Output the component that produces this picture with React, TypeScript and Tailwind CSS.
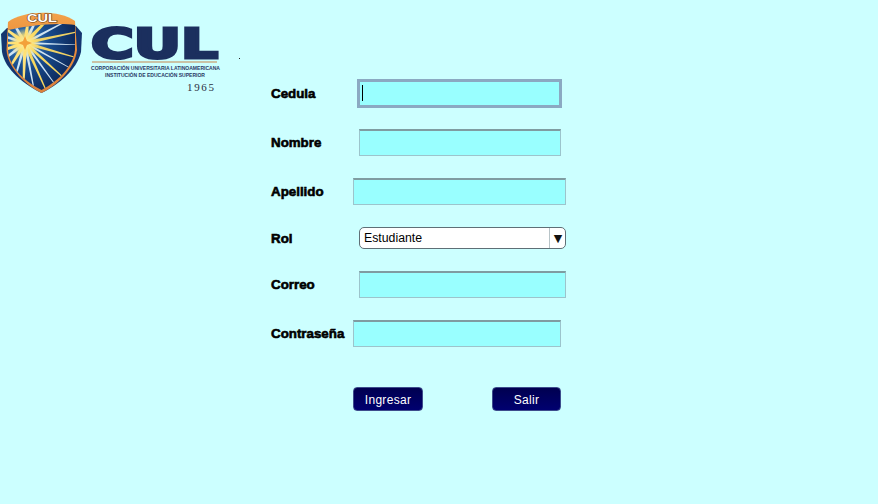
const RAYS = [
  { a: -82, c: '#ffe27a', w: 2.2 }, { a: -64, c: '#cfe4f2', w: 2 }, { a: -46, c: '#f8d860', w: 2.4 },
  { a: -28, c: '#cfe4f2', w: 1.8 }, { a: -12, c: '#f0d264', w: 2 }, { a: 2, c: '#cfe4f2', w: 1.4 },
  { a: 16, c: '#f0d264', w: 2 }, { a: 29, c: '#cfe4f2', w: 1.4 }, { a: 42, c: '#f8d860', w: 2 },
  { a: 54, c: '#cfe4f2', w: 1.6 }, { a: 66, c: '#f8d860', w: 2.2 }, { a: 79, c: '#cfe4f2', w: 1.8 },
  { a: 92, c: '#ffe27a', w: 2.4 }, { a: 106, c: '#cfe4f2', w: 1.8 }, { a: 122, c: '#ffe27a', w: 2.2 },
  { a: 142, c: '#cfe4f2', w: 2 }, { a: 162, c: '#ffe27a', w: 2.2 }, { a: 180, c: '#ffe27a', w: 2 },
  { a: 198, c: '#cfe4f2', w: 2 }, { a: 216, c: '#ffe27a', w: 2.2 }, { a: 240, c: '#cfe4f2', w: 2 },
];

const rayPoints = (deg: number, w: number) => {
  const t = (deg * Math.PI) / 180;
  const ex = 25 + 72 * Math.cos(t);
  const ey = 43 + 72 * Math.sin(t);
  const nx = -Math.sin(t) * w * 0.5;
  const ny = Math.cos(t) * w * 0.5;
  return `${25 + nx},${43 + ny} ${ex},${ey} ${25 - nx},${43 - ny}`;
};

function Logo() {
  return (
    <svg width="240" height="100" viewBox="0 0 240 100">
      <defs>
        <clipPath id="field">
          <path d="M8 30 C26 26 56 22 75 25 L75 50 C73 68 55 83 41.500 90 C27 83 9 68 8 50 Z" />
        </clipPath>
        <radialGradient id="sky" cx="25" cy="43" r="56" gradientUnits="userSpaceOnUse">
          <stop offset="0" stopColor="#3f86c4" />
          <stop offset="0.45" stopColor="#174a8c" />
          <stop offset="1" stopColor="#0b2250" />
        </radialGradient>
        <radialGradient id="burst" cx="25" cy="43" r="15" gradientUnits="userSpaceOnUse">
          <stop offset="0" stopColor="#fff0a0" />
          <stop offset="0.55" stopColor="#ffe070" stopOpacity="0.8" />
          <stop offset="1" stopColor="#ffe070" stopOpacity="0" />
        </radialGradient>
        <linearGradient id="band" x1="0" y1="0" x2="0" y2="1">
          <stop offset="0" stopColor="#f2a24a" />
          <stop offset="0.4" stopColor="#ea8c3a" />
          <stop offset="1" stopColor="#d9813c" />
        </linearGradient>
      </defs>

      {/* Shield */}
      <path d="M1 34 L7 28 L76 26 L82 33 L81 52 C77 70 58 85 41.500 93 C25 85 5 70 2 52 Z" fill="#14356f" />
      <path d="M8 22 C22 11 58 9 75 21 L77 50 C75 69 56 86 41.500 93 C27 86 8 69 6.500 50 Z" fill="url(#band)" />
      <path d="M8 30 C26 26 56 22 75 25 L75 50 C73 68 55 83 41.500 90 C27 83 9 68 8 50 Z" fill="url(#sky)" />
      <g clipPath="url(#field)">
        {RAYS.map(r => (
          <polygon key={r.a} points={rayPoints(r.a, r.w * 1.7)} fill={r.c} />
        ))}
        <circle cx="25" cy="43" r="15" fill="url(#burst)" />
        <path d="M25 36 L27 41 L32 43 L27 45 L25 50 L23 45 L18 43 L23 41 Z" fill="#f3a03a" />
      </g>
      <text x="27" y="22" textLength="30" lengthAdjust="spacingAndGlyphs" fontFamily="'Liberation Sans', sans-serif" fontWeight="700" fontSize="10" fill="#ffffff" stroke="#6e4218" strokeWidth="1" paintOrder="stroke">CUL</text>

      {/* Wordmark */}
      <text x="91" y="58" textLength="127" lengthAdjust="spacingAndGlyphs" fontFamily="'DejaVu Sans', sans-serif" fontWeight="700" fontSize="41" fill="#1b2f5e" stroke="#1b2f5e" strokeWidth="3" strokeLinejoin="miter">CUL</text>
      <rect x="92" y="61" width="125" height="2" fill="#c9c3a6" />
      <text x="91" y="70" textLength="129" lengthAdjust="spacingAndGlyphs" fontFamily="'Liberation Sans', sans-serif" fontWeight="700" fontSize="5" fill="#2a3a66">CORPORACIÓN UNIVERSITARIA LATINOAMERICANA</text>
      <text x="105" y="77" textLength="100" lengthAdjust="spacingAndGlyphs" fontFamily="'Liberation Sans', sans-serif" fontWeight="700" fontSize="5" fill="#2a3a66">INSTITUCIÓN DE EDUCACIÓN SUPERIOR</text>
      <text x="187" y="91" textLength="27" fontFamily="'Liberation Serif', serif" fontSize="11" fill="#2b3040">1965</text>
      <rect x="239" y="58" width="1" height="1" fill="#222" />
    </svg>
  );
}

const LABEL = "w-[82px] shrink-0 font-['Liberation_Sans',sans-serif] text-[13.33px] font-bold text-black [-webkit-text-stroke:0.6px_#000]";
const FIELD = 'h-[27px] border border-[#9cc4cc] border-t-2 border-t-[#7f9ca1] bg-[#99ffff] outline-none';
const BUTTON = "h-[24px] rounded-[4px] border border-[#3d4c8c] bg-gradient-to-b from-[#000050] to-[#000070] pt-px font-['Liberation_Sans',sans-serif] text-[12px] tracking-[0.3px] text-white";

export default function App() {
  return (
    <div className="flex h-[504px] w-[878px] overflow-hidden bg-[#ccffff]">
      <div className="w-[271px] shrink-0">
        <Logo />
      </div>

      <form className="flex flex-col gap-[22px] pt-[80px]">
        <div className="flex h-[27px] items-center">
          <label className={LABEL}>Cedula</label>
          <div className="relative ml-[4px] h-[29px] w-[205px]">
            <input className="block h-full w-full border-[3px] border-[#8ba9c2] bg-[#99ffff] outline-none" />
            <span className="absolute left-[5px] top-[6px] h-[16px] w-px bg-black" />
          </div>
        </div>

        <div className="flex h-[27px] items-center">
          <label className={LABEL}>Nombre</label>
          <input className={`${FIELD} ml-[6px] w-[202px]`} />
        </div>

        <div className="flex h-[27px] items-center">
          <label className={LABEL}>Apellido</label>
          <input className={`${FIELD} w-[213px]`} />
        </div>

        <div className="flex h-[22px] items-center">
          <label className={`${LABEL} pt-px`}>Rol</label>
          <div className="relative ml-[6px] h-[22px] w-[207px]">
            <select className="block h-full w-full appearance-none rounded-[5px] border border-[#5f6f76] bg-white pl-1 pt-px font-['Liberation_Sans',sans-serif] text-[12.3px] text-black outline-none">
              <option>Estudiante</option>
            </select>
            <span className="pointer-events-none absolute right-0 top-px flex h-[20px] w-[17px] items-center justify-center border-l border-[#b8c4c8] font-['DejaVu_Sans',sans-serif] text-[11px] leading-none text-[#111]">
              ▼
            </span>
          </div>
        </div>

        <div className="flex h-[27px] items-center">
          <label className={LABEL}>Correo</label>
          <input className={`${FIELD} ml-[6px] w-[207px]`} />
        </div>

        <div className="flex h-[27px] items-center">
          <label className={LABEL}>Contraseña</label>
          <input className={`${FIELD} w-[208px]`} />
        </div>

        <div className="ml-[82px] mt-[18px] flex gap-[69px]">
          <button type="button" className={`${BUTTON} w-[70px]`}>Ingresar</button>
          <button type="button" className={`${BUTTON} w-[69px]`}>Salir</button>
        </div>
      </form>
    </div>
  );
}
